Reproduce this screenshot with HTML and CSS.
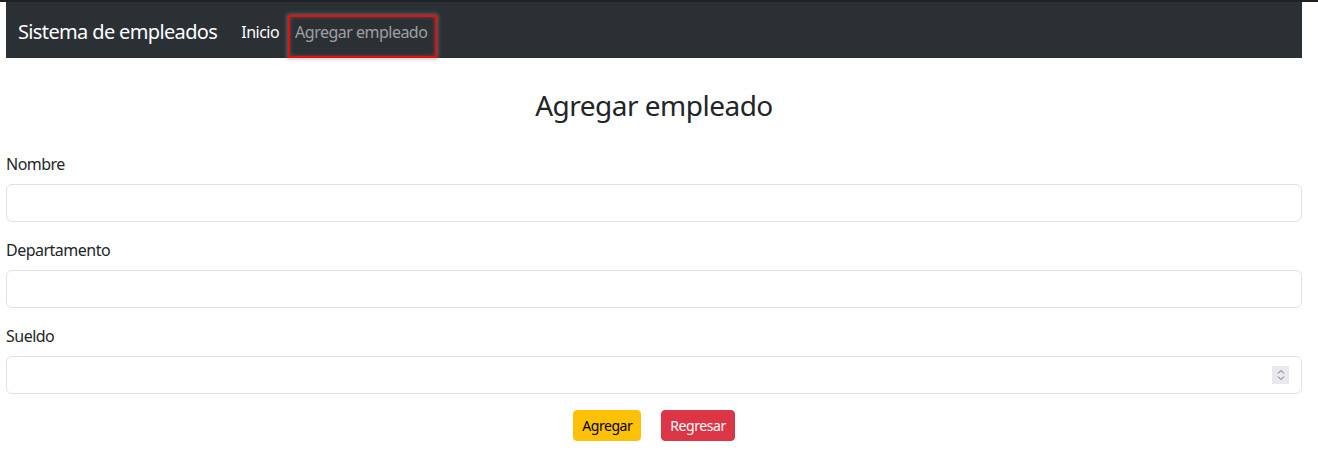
FILE: index.html
```html
<!DOCTYPE html>
<html lang="es">
<head>
<meta charset="utf-8">
<title>Sistema de empleados</title>
<link rel="stylesheet" href="styles.css">
</head>
<body>
<div class="topline"></div>
<div class="page">
  <nav class="navbar">
    <a class="brand" href="#">Sistema de empleados</a>
    <ul class="nav">
      <li><a class="nav-link active" href="#">Inicio</a></li>
      <li><a class="nav-link marked" href="#">Agregar empleado</a></li>
    </ul>
  </nav>
  <main class="content">
    <h3 class="title">Agregar empleado</h3>
    <form class="form">
      <div class="field">
        <label class="label" for="nombre">Nombre</label>
        <input class="control" id="nombre" type="text">
      </div>
      <div class="field">
        <label class="label" for="dep">Departamento</label>
        <input class="control" id="dep" type="text">
      </div>
      <div class="field">
        <label class="label" for="sueldo">Sueldo</label>
        <div class="num-wrap">
          <input class="control" id="sueldo" type="text">
          <span class="spinner">
            <svg width="10" height="14" viewBox="0 0 10 14"><path d="M2 5.5 L5 2.5 L8 5.5 M2 8.5 L5 11.5 L8 8.5" fill="none" stroke="#6b6b70" stroke-width="1"/></svg>
          </span>
        </div>
      </div>
      <div class="actions">
        <button type="button" class="btn btn-warning">Agregar</button>
        <button type="button" class="btn btn-danger">Regresar</button>
      </div>
    </form>
  </main>
</div>
</body>
</html>
```
FILE: styles.css
```css
* { box-sizing: border-box; }
html, body { margin: 0; padding: 0; background: #fff; }
body {
  font-family: "Noto Sans", "Open Sans", sans-serif;
  color: #212529;
  font-size: 16px;
  line-height: 1.5;
  letter-spacing: -0.032em;
}
.topline { height: 2px; background: #1f2022; }
.page { width: 1296px; margin-left: 6px; }
.navbar {
  background: #2b3035;
  height: 56px;
  display: flex;
  align-items: center;
  padding: 10px 12px 6px;
}
.brand {
  color: #fff;
  text-decoration: none;
  font-size: 20px;
  line-height: 30px;
  margin-right: 16px;
  letter-spacing: -0.032em;
}
.nav { list-style: none; margin: 0; padding: 0; display: flex; }
.nav-link {
  display: block;
  padding: 8px;
  text-decoration: none;
  color: rgba(255,255,255,.55);
  font-size: 16px;
  line-height: 24px;
}
.nav-link.active { color: #fff; }
.nav-link.marked { position: relative; }
.nav-link.marked::after {
  content: "";
  position: absolute;
  left: 1px;
  top: 3px;
  width: 145px;
  height: 39px;
  border: 2px solid #f00a0a;
  box-shadow: 0 0 4px 1px rgba(150,150,150,.55), inset 0 0 4px rgba(150,150,150,.35);
}
.content { padding-top: 31px; }
.title {
  margin: 0 0 29px;
  text-align: center;
  font-size: 28px;
  font-weight: 400;
  line-height: 1.2;
}
.field { margin-bottom: 16px; }
.label { display: block; margin-bottom: 8px; }
.control {
  display: block;
  width: 100%;
  height: 38px;
  border: 1px solid #dee2e6;
  border-radius: 6px;
  padding: 6px 12px;
  font: inherit;
  background: #fff;
}
.num-wrap { position: relative; }
.spinner {
  position: absolute;
  right: 13px;
  top: 10px;
  width: 17px;
  height: 18px;
  background: #e9e9ed;
  display: flex;
  align-items: center;
  justify-content: center;
}
.actions {
  display: flex;
  justify-content: center;
  gap: 20px;
}
.btn {
  font: inherit;
  font-size: 14px;
  line-height: 21px;
  padding: 4px 8px;
  border-radius: 4px;
  border: 1px solid transparent;
  letter-spacing: -0.032em;
}
.btn-warning { background: #ffc107; border-color: #ffc107; color: #000; }
.btn-danger { background: #dc3545; border-color: #dc3545; color: #fff; }
```
